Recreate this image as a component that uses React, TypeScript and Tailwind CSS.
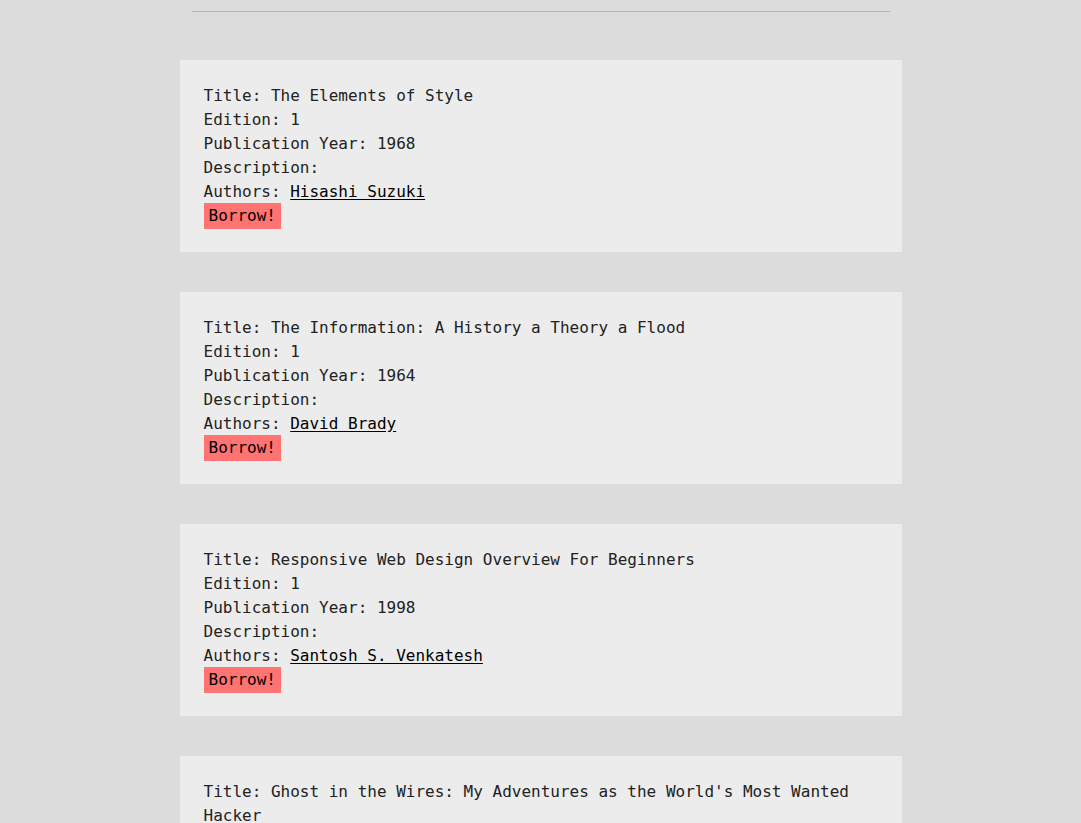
import React from 'react';

const books = [
  { title: 'The Elements of Style', edition: 1, year: 1968, author: 'Hisashi Suzuki' },
  { title: 'The Information: A History a Theory a Flood', edition: 1, year: 1964, author: 'David Brady' },
  { title: 'Responsive Web Design Overview For Beginners', edition: 1, year: 1998, author: 'Santosh S. Venkatesh' },
  { title: "Ghost in the Wires: My Adventures as the World's Most Wanted Hacker", edition: 1, year: 2011, author: 'Kevin Mitnick' },
];

const App: React.FC = () => {
  return (
    <div className="min-h-screen bg-[#dcdcdc] text-[#222] font-['DejaVu_Sans_Mono',monospace] text-base leading-6">
      <div className="w-[722px] mx-auto pt-[11px] pb-10">
        <div className="mx-3 h-px bg-[#b4b4b4]" />
        <div className="mt-12 flex flex-col gap-10">
          {books.map((book) => (
            <div key={book.title} className="bg-[#ececec] p-6">
              <div>Title: {book.title}</div>
              <div>Edition: {book.edition}</div>
              <div>Publication Year: {book.year}</div>
              <div>Description:</div>
              <div>
                Authors: <a href="#" className="text-black underline underline-offset-2">{book.author}</a>
              </div>
              <div className="h-6">
                <button className="bg-[#ff7373] text-black px-[5px] py-px leading-6 -mt-px">Borrow!</button>
              </div>
            </div>
          ))}
        </div>
      </div>
    </div>
  );
};

export default App;
